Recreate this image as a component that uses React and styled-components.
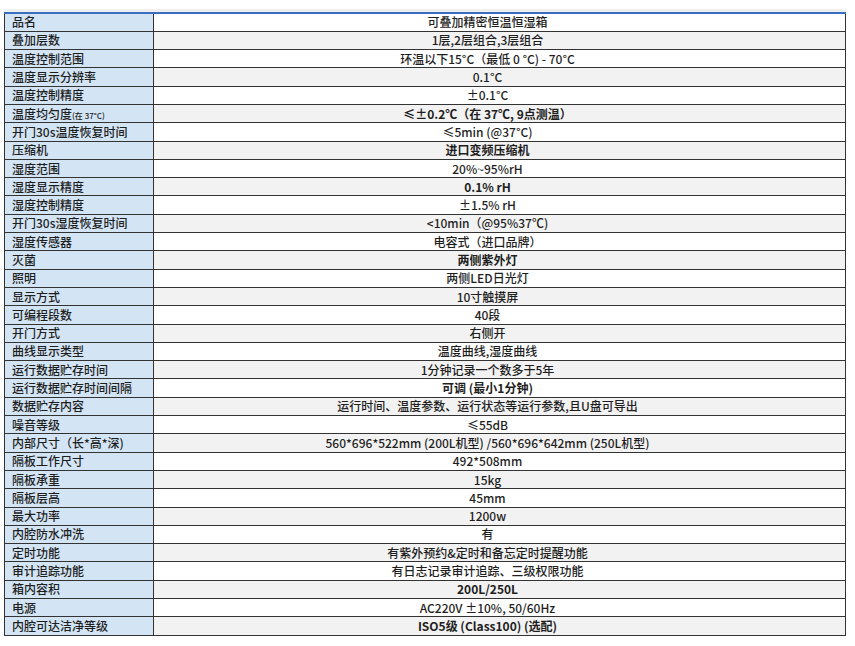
import styled, { createGlobalStyle } from 'styled-components';

const GlobalStyle = createGlobalStyle`
  body {
    margin: 0;
    background: #ffffff;
    font-family: "Noto Sans CJK SC", "Noto Sans", sans-serif;
    color: #1e1e1e;
  }
`;

const Page = styled.div`
  padding: 9px 9px 0 4px;
`;

const Frame = styled.div`
  border-top: 3px solid #efefef;
`;

const Table = styled.table`
  width: 842px;
  border-collapse: collapse;
  border-top: 2px solid #3a6ec0;
  border-left: 1.5px solid #333;
  border-right: 1.5px solid #333;
  font-size: 12px;
  line-height: 1;
`;

const Row = styled.tr`
  height: 18.3px;
  border-bottom: 1.5px solid #333;
`;

const Label = styled.td`
  width: 141px;
  padding: 0 0 0 7px;
  background: #d3e5f5;
  border-right: 1.5px solid #333;
  font-weight: 500;
  white-space: nowrap;
`;

const Small = styled.span`
  font-size: 8px;
`;

const Value = styled.td`
  padding: 0 24px 0 0;
  text-align: center;
  background: ${p => (p.$alt ? '#f2f2f2' : '#ffffff')};
  font-weight: ${p => (p.$bold ? 700 : 500)};
  white-space: nowrap;
`;

const specs = [
  ['品名', '可叠加精密恒温恒湿箱'],
  ['叠加层数', '1层,2层组合,3层组合'],
  ['温度控制范围', '环温以下15°C（最低 0 °C) - 70°C'],
  ['温度显示分辨率', '0.1°C'],
  ['温度控制精度', '±0.1°C'],
  [<>温度均匀度<Small>(在 37°C)</Small></>, '≤±0.2℃（在 37℃, 9点测温）', true],
  ['开门30s温度恢复时间', '≤5min (@37°C)'],
  ['压缩机', '进口变频压缩机', true],
  ['湿度范围', '20%~95%rH'],
  ['湿度显示精度', '0.1% rH', true],
  ['湿度控制精度', '±1.5% rH'],
  ['开门30s湿度恢复时间', '<10min（@95%37℃)'],
  ['湿度传感器', '电容式（进口品牌）'],
  ['灭菌', '两侧紫外灯', true],
  ['照明', '两侧LED日光灯'],
  ['显示方式', '10寸触摸屏'],
  ['可编程段数', '40段'],
  ['开门方式', '右侧开'],
  ['曲线显示类型', '温度曲线,湿度曲线'],
  ['运行数据贮存时间', '1分钟记录一个数多于5年'],
  ['运行数据贮存时间间隔', '可调 (最小1分钟)', true],
  ['数据贮存内容', '运行时间、温度参数、运行状态等运行参数,且U盘可导出'],
  ['噪音等级', '≤55dB'],
  ['内部尺寸（长*高*深)', '560*696*522mm (200L机型) /560*696*642mm (250L机型)'],
  ['隔板工作尺寸', '492*508mm'],
  ['隔板承重', '15kg'],
  ['隔板层高', '45mm'],
  ['最大功率', '1200w'],
  ['内腔防水冲洗', '有'],
  ['定时功能', '有紫外预约&定时和备忘定时提醒功能'],
  ['审计追踪功能', '有日志记录审计追踪、三级权限功能'],
  ['箱内容积', '200L/250L', true],
  ['电源', 'AC220V ±10%, 50/60Hz'],
  ['内腔可达洁净等级', 'ISO5级 (Class100) (选配)', true],
];

const App = () => {
  return (
    <Page>
      <GlobalStyle />
      <Frame>
        <Table>
          <tbody>
            {specs.map(([label, value, bold], i) => (
              <Row key={i}>
                <Label>{label}</Label>
                <Value $alt={i % 2 === 1} $bold={bold}>{value}</Value>
              </Row>
            ))}
          </tbody>
        </Table>
      </Frame>
    </Page>
  );
};

export default App;
